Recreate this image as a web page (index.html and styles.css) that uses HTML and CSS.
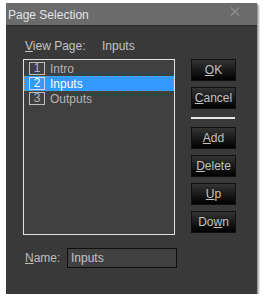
FILE: index.html
```html
<!DOCTYPE html>
<html>
<head>
	<meta charset='utf-8'>
	<title>Page Selection</title>
	<link rel="stylesheet" href="styles.css">
</head>
<body>

<div class="window">
	<div class="titlebar">
		<span class="title">Page Selection</span>
		<svg class="close" width="10" height="9" viewBox="0 0 10 9">
			<path d="M1 0.5 L9 8.5 M9 0.5 L1 8.5" stroke="#8c8c8c" stroke-width="1.6"/>
		</svg>
	</div>

	<div class="content">
		<div class="main">
			<div class="left">
				<div class="viewrow">
					<span class="lbl"><u>V</u>iew Page:</span>
					<span class="val">Inputs</span>
				</div>
				<div class="list">
					<div class="row"><span class="num">1</span><span class="name">Intro</span></div>
					<div class="row sel"><span class="num">2</span><span class="name">Inputs</span></div>
					<div class="row"><span class="num">3</span><span class="name">Outputs</span></div>
				</div>
			</div>

			<div class="right">
				<button class="btn"><u>O</u>K</button>
				<button class="btn"><u>C</u>ancel</button>
				<div class="sep"></div>
				<button class="btn"><u>A</u>dd</button>
				<button class="btn"><u>D</u>elete</button>
				<button class="btn"><u>U</u>p</button>
				<button class="btn">Do<u>w</u>n</button>
			</div>
		</div>

		<div class="namerow">
			<label for="pname"><u>N</u>ame:</label>
			<input type="text" id="pname" value="Inputs">
		</div>
	</div>
</div>

</body>
</html>
```

FILE: styles.css
```css
body{
	margin: 0;
	background-color: #ffffff;
	font-family: "Liberation Sans", Arial, sans-serif;
	font-size: 12px;
}
u{
	text-decoration: underline;
	text-underline-offset: 1px;
}
.window{
	margin: 3px 0 0 6px;
	width: 251px;
	height: 291px;
	background-color: #393939;
	box-shadow: 1px 1px 0 #9a9a9a, 2px 2px 0 #c4c4c4, 3px 3px 0 #e4e4e4;
}
.titlebar{
	height: 22px;
	background-color: #6b6b6b;
	border-bottom: 1px solid #2b2b2b;
	display: flex;
	align-items: center;
	justify-content: space-between;
	padding: 0 17px 0 2px;
}
.title{
	color: #e4e4e4;
	font-size: 12px;
	margin-top: 1px;
}
.close{
	margin-top: -5px;
}
.content{
	padding: 13px 0 0 17px;
	color: #c4c4c4;
}
.main{
	display: flex;
	gap: 16px;
}
.left{
	width: 152px;
}
.viewrow{
	height: 14px;
	line-height: 14px;
	margin: 0 0 6px 2px;
	display: flex;
}
.lbl{
	width: 77px;
}
.list{
	height: 173px;
	border: 1px solid #e2e2e2;
	background-color: #404040;
	padding-top: 1px;
}
.row{
	height: 15px;
	display: flex;
	align-items: center;
	color: #b4b4b4;
	border: 1px solid transparent;
	box-sizing: border-box;
}
.row.sel{
	background-color: #3399ff;
	color: #ffffff;
	border: 1px dotted #e08a2a;
}
.num{
	width: 16px;
	height: 13px;
	line-height: 11px;
	box-sizing: border-box;
	border: 1px solid #bfbfbf;
	text-align: center;
	margin: 0 5px 0 4px;
	font-size: 12px;
}
.sel .num{
	border-color: #c4d8ee;
}
.right{
	padding-top: 20px;
	display: flex;
	flex-direction: column;
	gap: 6px;
}
.btn{
	width: 45px;
	height: 22px;
	padding: 0;
	border: 1px solid #111111;
	background: linear-gradient(#343434, #1a1a1a 50%, #000000);
	color: #c2c2c2;
	font-family: "Liberation Sans", Arial, sans-serif;
	font-size: 12px;
}
.sep{
	width: 44px;
	height: 2px;
	background-color: #e8e8e8;
	margin: 2px 0;
}
.namerow{
	margin-top: 13px;
	display: flex;
	align-items: center;
}
.namerow label{
	width: 42px;
	margin-left: 2px;
	color: #bdbdbd;
}
.namerow input{
	width: 110px;
	height: 20px;
	box-sizing: border-box;
	border: 1px solid #0e0e0e;
	background-color: #404040;
	color: #c4c4c4;
	font-family: "Liberation Sans", Arial, sans-serif;
	font-size: 12px;
	padding: 0 3px;
	outline: none;
}
```
